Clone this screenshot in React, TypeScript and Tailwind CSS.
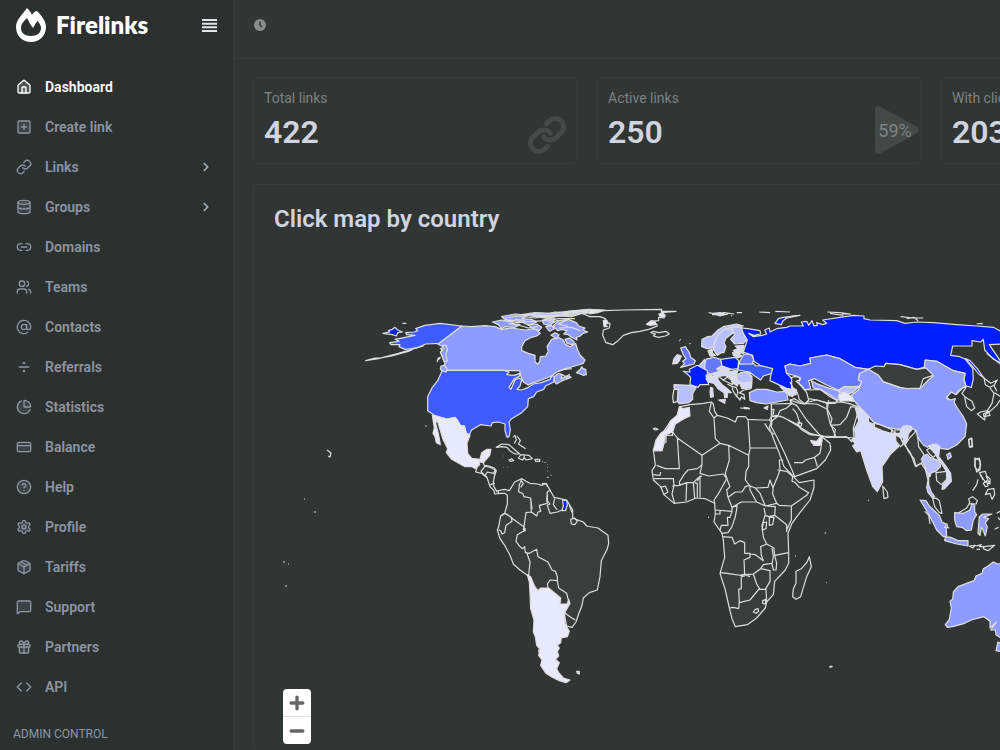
import {
  AtSign,
  ChartPie,
  ChevronRight,
  CircleHelp,
  Code,
  CreditCard,
  Database,
  Divide,
  Gift,
  House,
  Link,
  Link2,
  MessageSquare,
  Minus,
  Package,
  Plus,
  Settings,
  SquarePlus,
  Users,
  type LucideIcon,
} from "lucide-react";

interface NavItem {
  label: string;
  icon: LucideIcon;
  active?: boolean;
  nested?: boolean;
  tinted?: boolean;
}

const navItems: NavItem[] = [
  { label: "Dashboard", icon: House, active: true, tinted: true },
  { label: "Create link", icon: SquarePlus, tinted: true },
  { label: "Links", icon: Link, nested: true },
  { label: "Groups", icon: Database, nested: true, tinted: true },
  { label: "Domains", icon: Link2 },
  { label: "Teams", icon: Users },
  { label: "Contacts", icon: AtSign },
  { label: "Referrals", icon: Divide },
  { label: "Statistics", icon: ChartPie, tinted: true },
  { label: "Balance", icon: CreditCard, tinted: true },
  { label: "Help", icon: CircleHelp, tinted: true },
  { label: "Profile", icon: Settings, tinted: true },
  { label: "Tariffs", icon: Package, tinted: true },
  { label: "Support", icon: MessageSquare, tinted: true },
  { label: "Partners", icon: Gift, tinted: true },
  { label: "API", icon: Code },
];

// click intensity scale, darkest blue = most clicks
const NONE = "#393d3c";
const C1 = "#e8eaff";
const C2 = "#d5daff";
const C3 = "#b8c0ff";
const C4 = "#8f9cff";
const C5 = "#6678ff";
const C6 = "#3f5aff";
const C7 = "#001eff";

type Shape = [fill: string, d: string];

interface Region {
  name: string;
  x: number;
  y: number;
  shapes: Shape[];
}

// every region is drawn at 3x around its own origin
const regions: Region[] = [
  {
    name: "north-america",
    x: 355,
    y: 300,
    shapes: [
      [C4, "M320 78L350 80L390 77L420 80L440 88L470 84L510 90L540 86L556 100L545 108L530 112L510 122L500 140L500 152L520 160L540 166L540 185L547 192L554 186L556 170L572 168L580 155L576 140L590 118L610 112L625 120L630 132L645 140L662 130L668 150L675 165L690 180L685 190L660 198L625 208L605 216L590 228L560 240L530 250L520 255L505 246L498 230L494 212L470 212L448 211L262 211L270 190L258 160L264 140L248 132Z"],
      [C6, "M262 211L448 211L462 216L455 224L478 226L494 220L494 228L478 236L462 262L468 268L480 240L492 234L500 240L495 258L486 268L500 270L520 262L535 252L558 248L585 238L592 226L598 230L596 246L572 258L566 268L545 276L536 290L520 296L518 320L500 338L470 356L462 366L466 390L462 410L456 412L450 392L450 372L430 366L412 368L408 378L376 374L350 390L343 404L334 400L328 378L316 376L300 352L276 357L238 346L218 332L218 290L232 262L248 242Z"],
      [C6, "M320 78L252 130L212 132L190 142L170 146L150 148L132 140L135 134L108 134L104 128L132 124L120 118L150 112L180 106L155 104L152 98L178 96L188 92L182 86L210 76L256 70Z"],
      [C6, "M205 138L182 144L160 154L110 168L78 174L60 174L32 182L70 176L130 160L170 148Z"],
      [C7, "M84 100L104 96L100 92L112 88L120 82L128 90L142 96L128 98L124 108L112 104Z"],
      [C4, "M262 136L274 136L277 150L272 164L277 182L268 186L262 170L256 156L264 150L256 146L268 142M246 186L250 174L256 172L250 180M256 208L258 198L268 196L276 206L274 216L264 214Z"],
      [C4, "M412 66L440 60L475 62L470 70L495 74L480 82L450 80L440 86L430 74Z"],
      [C4, "M440 50L480 42L520 46L500 56L530 58L545 66L520 76L500 66L478 62L450 58Z"],
      [C4, "M520 74L545 72L560 82L552 92L530 84ZM562 60L590 56L600 66L582 76L566 72ZM572 80L590 76L598 86L584 94Z"],
      [C4, "M594 78L612 62L640 58L664 68L672 78L690 84L684 90L698 96L684 100L676 108L664 112L666 120L650 112L640 104L626 102L636 92L620 88L608 92Z"],
      [C4, "M588 106L600 98L612 104L606 116ZM630 118L644 114L658 126L652 134L636 130Z"],
      [C3, "M500 44L540 38L590 40L640 34L700 28L750 30L728 38L680 40L650 50L610 48L580 56L545 50Z"],
      ["none", "M450 54L490 48L540 54L600 46L660 42L740 33M530 44L590 50L640 44L620 38L700 34M446 62L490 68L530 64L580 62L610 56L660 56M584 40L600 36L640 38L690 30M590 52L610 62L580 68M640 58L610 72L640 80M612 84L650 82L676 92M480 58L510 62M460 70L500 78L520 84L548 80"],
      [C4, "M664 218L676 208L680 200L684 206L692 208L694 224L684 226L676 222ZM598 230L610 220L622 224L618 236L640 226L648 232L622 242L604 252L598 244Z"],
      ["none", "M610 214L628 208L650 206M622 224L636 232L644 222"],
      [C1, "M232 346L276 357L300 352L306 358L316 376L328 378L334 400L345 406L336 430L338 460L350 475L375 478L380 458L396 448L408 448L404 466L392 480L386 488L372 484L374 494L362 506L350 500L330 500L290 478L274 458L278 446L264 418L254 385L246 358L242 370L250 400L256 434L244 428L240 410L234 400L238 384Z"],
      [NONE, "M385 488L388 496L402 498L418 504L424 512L414 540L392 530L380 520L362 516L366 502L374 494L372 486Z"],
      ["none", "M380 520L390 512L402 500M392 530L404 516L424 512"],
      ["none", "M424 442L440 432L462 434L480 450L494 462L480 462L466 454L456 442L440 440ZM474 412L480 406L484 420L478 430M486 408L496 422L490 432L512 446M462 480L470 476L476 482L466 484ZM490 474L498 464L522 466L532 476L514 480L508 474L502 480ZM540 478L554 478L554 484L542 484ZM508 466L506 478M142 70L154 70"],
      ["none", "M212 380L213 380M214 376L213 378M444 468L445 468M446 502L447 502M456 502L457 502M562 484L564 484M570 486L571 488M576 494L577 494M577 502L578 503M578 512L579 514M587 526L589 526M580 530L578 534"],
    ],
  },
  {
    name: "south-america",
    x: 470,
    y: 430,
    shapes: [
      [NONE, "M33 124L42 134L50 140L60 170L72 182L74 192L92 190L104 190L112 196L112 222L104 250L92 258L86 290L82 300L90 326L104 346L120 376L130 402L150 420L172 436L180 444L200 480L206 520L280 540L284 560L290 588L306 592L318 576L326 552L336 526L340 504L358 488L382 480L390 440L394 392L412 356L416 340L414 316L384 294L350 288L340 276L318 268L308 264L308 240L296 220L290 210L270 206L252 202L240 180L228 160L214 166L204 162L180 160L168 154L156 146L134 156L118 182L104 178L92 180L80 184L72 170L70 158L76 120L60 112L46 108Z"],
      [C1, "M172 434L182 440L194 470L204 482L212 474L236 474L272 504L270 522L292 522L296 508L300 520L284 548L284 580L298 604L292 620L274 624L272 638L262 646L268 654L262 664L266 678L256 688L268 698L260 716L266 728L280 744L300 750L288 758L268 752L244 740L228 730L212 706L216 690L206 676L210 656L200 646L196 620L190 606L192 570L182 536L180 490L178 456Z"],
      ["none", "M92 258L104 250L124 262L126 274L108 286L104 308L96 312L92 302L86 300M104 250L110 252L130 268L150 282L162 290L168 248L184 246L182 204L162 200L158 190L146 186L148 164L156 148M184 246L200 258L204 246L212 244L208 226L232 220L230 208L232 186L240 180M182 204L186 238M232 190L232 212L240 222L232 226L240 250L262 246L276 240L290 240M254 206L250 224L262 240M162 290L166 302L156 306L142 314L138 334L148 348L158 356L164 350L166 368L178 370L200 358L204 380L234 396L246 420L256 424L262 440L262 452L240 450L232 462L234 474M162 290L160 300L168 296M170 368L180 396L176 436M262 452L266 474L290 490L296 514M284 548L300 560L316 570M152 150L160 160L152 172M216 160L230 162L232 170M302 268L314 264L322 274L314 284L304 282ZM298 226L306 248M202 650L208 652L206 666M200 648L204 640M44 138L52 126L70 130L76 120M60 164L74 160M84 190L86 180"],
      [C7, "M278 210L290 212L292 226L286 242L276 242L280 228Z"],
      [C3, "M320 724L328 724L328 732L322 730Z"],
    ],
  },
  {
    name: "europe",
    x: 590,
    y: 300,
    shapes: [
      ["none", "M-66 34L-20 30L40 32L100 30L215 28L214 34L258 34L214 38L226 46L222 54L206 52L206 62L180 64L186 72L170 74L200 72L202 78L176 88L150 94L124 98L100 106L84 122L68 134L48 128L38 106L40 90L58 84L60 70L44 68L46 56L30 50L0 50L-20 42Z"],
      [C1, "M40 62L50 60L54 68L46 74L52 80L42 80ZM206 42L220 40L224 50L212 52ZM170 72L184 62L196 66L198 74L180 76ZM0 30L16 32L18 38L0 42Z"],
      ["none", "M182 98L190 94L206 98L228 94L238 102L226 108L206 112L190 108L196 102ZM356 38L380 42L402 38L432 42M366 44L400 44M396 46L414 42M424 46L426 48M440 38L456 38M508 36L540 38M556 34L600 36M270 118L272 120M298 132L302 130M268 122L270 122"],
      [C2, "M370 40L390 38L404 42L390 48Z"],
      [C3, "M335 140L336 118L352 110L366 108L384 90L400 80L440 72L460 78L430 80L405 88L385 105L375 125L370 142L352 146Z"],
      [C3, "M405 88L425 86L430 98L408 115L402 128L408 140L402 158L394 158L382 166L370 148L375 125L385 102Z"],
      [C3, "M425 82L455 80L460 96L472 118L460 130L434 132L422 118L434 104L428 94Z"],
      [C2, "M354 152L366 146L368 160L376 166L360 168ZM436 138L462 136L460 146L444 146ZM430 152L444 146L462 150L460 160L440 158ZM428 158L444 160L456 168L444 174L430 166Z"],
      [C5, "M272 144L286 140L298 158L302 172L316 182L312 192L296 196L272 202L284 192L278 184L288 176L280 164Z"],
      [C2, "M252 176L262 164L274 168L268 182L262 190L248 192Z"],
      [C3, "M328 196L344 178L348 196L342 208Z"],
      [C5, "M346 184L350 176L362 176L364 170L392 178L396 198L380 206L388 216L362 222L346 216L344 200Z"],
      [C7, "M392 178L435 172L446 182L444 206L425 208L396 198Z"],
      [C7, "M280 214L300 216L298 208L322 196L352 212L352 236L356 254L330 254L324 262L300 254L302 232L292 222Z"],
      [C2, "M382 206L396 198L420 208L414 216L396 214ZM362 222L388 214L412 216L408 226L380 230ZM348 226L364 222L366 234L350 236Z"],
      [C2, "M410 216L444 210L440 224L420 232L408 228ZM420 232L436 226L448 244L442 258L430 250ZM448 248L486 248L484 264L456 266Z"],
      [C2, "M348 236L366 230L384 230L384 240L396 254L414 268L424 278L412 278L412 292L404 292L402 278L384 266L372 250L354 246ZM386 300L406 298L404 310ZM362 262L368 264L370 290L362 292L360 276Z"],
      [C6, "M446 192L490 190L498 198L530 196L548 206L546 220L520 228L512 240L494 228L478 216L444 210Z"],
      [C5, "M448 186L462 162L484 164L492 178L486 192L450 192Z"],
      [C3, "M440 226L452 218L472 216L486 230L486 244L460 250L442 242Z"],
      [C3, "M252 254L300 256L318 264L308 280L308 298L296 308L268 312L262 304L264 268L252 264Z"],
      [NONE, "M252 268L264 268L262 304L250 308L248 290Z"],
      ["none", "M388 232L400 240L412 232L424 240L428 254L412 246L398 240M412 252L428 260L438 262L444 276L440 288L450 300L454 290L464 298L462 284L448 278L462 270L484 266M426 262L430 274L440 290M462 322L476 324L478 326L464 326ZM522 324L534 318L532 328ZM478 216L482 232M438 210L436 222"],
      [C4, "M478 278L500 268L530 268L560 276L590 274L594 300L560 306L530 312L500 308L480 302Z"],
      [C2, "M570 260L606 262L620 270L618 284L600 288L586 276Z"],
      ["none", "M586 276L602 268L608 290L594 282"],
    ],
  },
  {
    name: "asia",
    x: 790,
    y: 300,
    shapes: [
      [C7, "M-146 84L-126 86L-90 92L-88 102L-108 106L-124 100L-110 110L-84 106L-70 102L-76 90L-62 84L-60 96L-40 86L-10 82L0 78L40 78L34 66L50 64L56 76L66 62L72 78L82 76L80 68L98 74L110 70L98 60L150 52L190 46L222 48L222 56L240 60L320 62L345 70L380 66L430 68L500 74L560 78L610 82L636 96L636 132L598 134L610 152L636 190L608 176L584 150L580 118L572 126L546 122L546 138L488 138L482 166L510 170L526 178L548 205L550 236L544 262L528 258L522 240L525 220L490 212L440 184L408 180L410 200L380 208L330 194L288 190L282 200L235 208L195 202L150 176L110 165L60 174L62 190L30 198L0 192L-15 198L-10 220L5 235L5 268L-10 265L-60 242L-58 228L-52 206L-90 196L-108 184L-112 166L-140 156L-132 132L-128 120L-140 100Z"],
      [C7, "M-45 70L-35 56L-20 52L30 46L-10 54L-22 64L-26 74ZM526 176L540 182L562 206L582 234L566 222L550 202Z"],
      ["none", "M112 36L150 38L182 42L156 42M120 40L160 46M332 50L370 54L400 54M350 56L372 52L384 62M560 72L578 70M572 70L576 74M0 50L22 46"],
      [C5, "M0 192L30 198L62 190L60 174L110 165L150 176L195 202L235 208L208 222L206 238L216 244L208 258L160 262L145 270L110 255L74 236L56 242L62 266L44 270L26 250L30 235L20 228L-10 220L-15 198Z"],
      [C4, "M235 208L265 225L280 245L330 262L390 266L415 240L430 228L402 216L405 180L440 184L490 212L525 220L522 240L528 258L505 272L498 284L484 276L470 292L480 300L496 296L492 306L502 324L520 350L530 372L525 410L500 435L475 448L455 446L430 432L412 442L400 435L385 415L375 390L350 376L330 388L290 382L250 366L235 348L212 325L190 300L185 285L205 270L215 245L205 240L210 220Z"],
      [C4, "M64 242L78 250L110 262L145 272L150 280L144 302L120 285L90 268L70 264Z"],
      [C3, "M145 272L162 260L208 260L188 278L160 284Z"],
      [C1, "M146 286L162 276L184 288L192 304L172 302L150 304Z"],
      [NONE, "M235 208L256 198L282 200L288 190L330 194L380 208L408 204L430 226L400 236L390 264L350 266L330 262L280 245L265 225Z"],
      [NONE, "M0 300L14 296L40 312L54 306L80 300L110 308L150 306L176 310L210 322L200 350L190 384L192 414L160 412L100 408L60 398L32 370L10 330Z"],
      ["none", "M0 234L14 230L30 232L32 238L18 244L36 258L50 278L56 300L44 312L28 298L22 278L8 262L0 246M44 268L62 270L90 268L120 290L142 302L136 310L112 310L82 300L56 296M110 308L112 336L122 376L136 388L132 412L170 410L186 426M122 376L150 374L170 352L182 320L206 322M0 300L12 320L34 370"],
      [C2, "M196 324L212 325L235 350L236 366L250 372L290 392L314 402L330 392L340 378L362 378L368 386L356 400L348 432L342 430L340 414L318 406L326 440L302 462L276 500L278 545L262 575L248 560L230 510L212 452L200 456L188 438L196 430L184 420L196 412L194 386L206 362Z"],
      [NONE, "M252 370L270 374L308 390L302 400L276 392L254 382ZM314 390L332 390L330 400L316 400ZM316 406L330 410L340 432L332 440L318 424Z"],
      [NONE, "M378 390L372 400L358 414L346 434L356 456L372 476L378 500L398 486L402 464L386 440L384 418Z"],
      ["none", "M498 284L520 262L528 262L516 280L526 292L546 304L554 324L544 332L530 320L524 292M470 292L474 300M536 420L544 414L548 440L540 442ZM556 478L568 474L572 496L564 512L554 500ZM582 234L602 250L622 240L612 256L600 262L586 254ZM600 264L612 280L606 310L592 332L572 336L562 342L572 350L584 360L586 344L600 334L620 316L630 300M614 278L632 290M580 342L596 334L600 346L582 350ZM590 160L636 196M612 256L620 274"],
    ],
  },
  {
    name: "africa-and-middle-east",
    x: 640,
    y: 400,
    shapes: [
      [NONE, "M120 20L150 14L190 10L214 6L220 12L224 34L232 46L262 54L286 66L292 50L316 50L324 58L368 60L388 60L394 66L388 82L402 120L418 160L432 200L448 216L466 236L478 248L522 240L522 262L510 300L478 340L456 370L444 400L446 458L446 490L436 510L404 544L400 584L380 606L376 624L350 654L322 674L286 680L276 656L268 624L256 570L240 520L254 472L250 420L246 400L222 366L226 342L224 310L196 296L168 294L140 306L102 310L72 284L62 260L40 240L36 212L46 196L40 150L62 108L90 66L110 50Z"],
      [NONE, "M394 12L456 10L470 16L500 60L540 106L570 130L572 150L556 180L530 206L464 230L456 210L434 160L410 110L394 80Z"],
      [C1, "M118 20L130 26L148 22L150 48L132 56L106 72L98 96L78 104L72 126L66 152L40 152L48 120L62 100L82 86L92 62L112 46Z"],
      ["none", "M98 96L98 106L78 106M66 152L72 130L78 126L78 106M40 152L66 152M112 114L186 166L186 194L172 206L144 210L132 224L118 246L120 256M112 114L118 206L76 206L50 196M98 96L112 114M186 166L240 130L266 136L326 166L330 146L324 58M240 130L226 116L222 54M214 6L208 34L222 54L232 46M330 144L410 144M326 166L326 200L318 214L316 240L330 258L346 264L384 262L390 240L398 262L402 256L412 232L420 210L418 180L430 180M266 136L268 180L256 220L262 240L270 260L260 270L264 292L286 276L306 276L316 260L330 256M186 194L180 220L206 228L250 222L260 236L236 280L222 300L224 310M40 224L60 226L62 216M42 236L100 236L102 256L96 282L104 310M62 262L76 258L84 276L70 284M96 258L118 256L140 248L160 248L164 294M140 248L138 304M164 248L172 250L172 292M172 244L180 228L180 292M160 248L174 234L186 228M264 292L276 322L304 306L350 306L376 318L410 310L418 316L454 318L454 360L440 390M350 306L330 270L330 256M346 264L360 280L376 318M400 256L398 282L410 310M412 210L440 214L458 230M464 246L478 262L506 278L500 286L480 300L454 318M458 230L456 244L464 246M226 330L276 334L276 322M226 342L240 342L240 332M276 334L270 352L262 352L264 376L244 376L240 390M292 316L286 350L276 380L264 398L246 400M276 322L290 318M246 410L276 412L284 432L300 422L314 428L314 460L330 460L330 472L312 480L314 522L300 526M372 324L376 344L366 376L370 412L380 432L362 440L364 466L370 482L346 464L330 462M378 318L406 320L404 346L386 350L376 346M404 346L440 374L440 396M404 466L446 458M370 368L380 366L378 386L366 390ZM388 352L402 352L398 374L388 376ZM380 432L402 444L404 466L410 490L408 510L400 510L396 492L400 470L396 444M396 490L370 494L362 506L340 522L314 524L330 530M240 518L262 520L314 528L304 530L304 566L296 568L298 608L330 600L356 568L378 568L380 606M268 624L280 622L296 626L298 606M340 522L350 552L360 568M362 506L390 512L390 544L376 568M346 628L354 626L356 634L348 640L340 636ZM368 602L378 598L376 612L368 610ZM328 524L340 522"],
      ["none", "M374 70L388 92L402 104M388 60L396 48L394 12M394 30L402 28L400 44M394 50L412 50L396 62L394 80M412 50L420 32L440 24L456 10M396 50L408 46L430 52L470 76L480 70L470 40L458 26M420 48L470 72L486 90L510 104L546 108L544 122L528 134L518 130L514 120M546 108L544 136L540 160L524 172L496 180L488 188L462 188M524 172L532 200M470 76L510 100L560 112L600 112M562 28L576 56L572 72L588 112M562 28L566 0M450 0L480 10L530 12L562 28M474 66L486 70L482 80L476 76Z"],
      [C1, "M512 122L530 124L544 108L546 122L540 136L522 136Z"],
      [NONE, "M508 470L514 500L500 530L482 590L468 598L458 590L460 566L468 550L468 514L484 506L500 488Z"],
      ["none", "M40 86L46 84L54 88L46 90ZM204 352L207 352M554 398L558 400M466 466L467 469M558 548L560 548M300 24L330 26M372 24L384 20"],
    ],
  },
  {
    name: "south-east-asia-and-australia",
    x: 830,
    y: 430,
    shapes: [
      [C3, "M280 78L292 72L300 82L316 88L328 92L332 110L318 124L304 128L300 140L296 130L296 164L304 186L314 200L308 204L294 188L290 172L294 150L284 110L274 88Z"],
      [C2, "M296 48L318 42L330 50L328 62L326 80L346 106L362 130L364 154L344 176L336 178L338 164L350 152L350 126L338 106L320 80L306 60Z"],
      [NONE, "M318 128L350 124L350 148L334 164L320 152ZM290 60L300 54L318 74L310 82L302 76Z"],
      [C4, "M350 74L360 68L364 80L354 88Z"],
      ["none", "M308 206L318 204L328 212L336 250L328 248L314 230ZM158 168L172 186L174 202L162 206ZM384 250L410 234L418 220M416 206L428 200L442 212L438 222L420 222ZM434 84L450 92L450 120L440 126L436 110ZM448 128L466 124L470 138L480 146L480 162L466 156L458 144ZM460 160L470 152L474 168L466 170ZM474 178L492 176L494 194L486 208L480 190L466 194ZM444 148L440 164L428 182M450 134L460 150M468 138L478 158M256 108L274 100L280 110L296 132M220 40L240 66L256 108M416 28L426 26L426 50L418 50ZM184 0L214 26L222 44"],
      [C4, "M270 210L288 212L298 228L328 256L336 276L348 282L350 318L340 320L320 300L308 276L290 242Z"],
      [C4, "M346 320L362 322L384 332L414 332L414 348L380 342L344 332Z"],
      [C4, "M374 248L400 250L420 240L426 220L434 226L434 246L440 254L430 270L424 300L410 302L396 292L380 290L374 270Z"],
      [C4, "M448 260L458 252L486 252L460 262L476 266L466 278L472 290L466 318L458 298L454 292L450 316L444 310Z"],
      ["none", "M418 348L436 346L428 354ZM438 348L454 344L448 350L464 350M450 358L440 358M462 350L494 346L474 362L460 356ZM284 244L296 256L300 282M342 292L358 294M350 280L354 294M500 250L510 244M494 298L506 292M504 262L510 270"],
      [C4, "M520 398L504 402L490 396L474 408L460 416L456 430L438 438L432 452L384 470L370 486L368 508L360 514L364 534L358 568L346 584L352 592L368 590L404 580L424 570L462 560L480 574L480 594L500 576L482 600L496 600L498 614L520 630Z"],
      [C4, "M504 636L498 662L520 666L520 644Z"],
      ["none", "M114 210L116 212M420 118L421 118M414 160L415 160M0 708L8 710M0 50L4 50"],
    ],
  },
];

const specks = ["M327 450L331 453L330 457L328 456", "M304 499h1", "M314 512h2", "M283 562h2", "M288 564h1", "M285 586h2", "M829 667h3"];

function Logo() {
  return (
    <a href="#" className="flex items-center gap-[10px] text-white">
      <svg viewBox="0 0 30 34" className="h-[34px] w-[30px]" fill="currentColor" aria-hidden="true">
        <path
          fillRule="evenodd"
          d="M11 0C13 2 15 4 16 7C17 5 19 3 21 3C25 7 30 13 30 19C30 28 23 34 15 34C7 34 0 28 0 19C0 12 6 7 11 0ZM11 10C8 13 5 16 5 20C5 25 9 28 15 28C21 28 25 25 25 20C25 17 23 15 22 13C20 14 19 17 17 20C14 17 13 13 11 10Z"
        />
      </svg>
      <span className="font-[Lato] text-[24px] leading-8 font-extrabold">Firelinks</span>
    </a>
  );
}

function NavRow({ item }: { item: NavItem }) {
  const Icon = item.icon;

  return (
    <li>
      <a
        href="#"
        className={`flex h-10 items-center gap-[13px] pr-5 pl-4 text-[14px] font-semibold ${
          item.active ? "text-white" : "text-[#8d95a3]"
        }`}
      >
        <Icon
          className="h-4 w-4"
          strokeWidth={2}
          fill={item.tinted ? "currentColor" : "none"}
          fillOpacity={0.18}
        />
        <span className="flex-1">{item.label}</span>
        {item.nested && <ChevronRight className="h-3.5 w-3.5 text-[#a7adb8]" strokeWidth={3} />}
      </a>
    </li>
  );
}

function Sidebar() {
  return (
    <aside className="w-[234px] shrink-0 border-r border-[#363a39] bg-[#2c302f]">
      <div className="flex h-[50px] items-center justify-between px-4">
        <Logo />
        <button type="button" aria-label="Toggle menu" className="text-[#e2e5ea]">
          <svg viewBox="0 0 15 13" className="h-[13px] w-[15px]" fill="currentColor">
            <path d="M0 0h15v2H0zM0 3.7h15v2H0zM0 7.3h15v2H0zM0 11h15v2H0z" />
          </svg>
        </button>
      </div>
      <nav className="pt-[17px]">
        <ul>
          {navItems.map((item) => (
            <NavRow key={item.label} item={item} />
          ))}
        </ul>
        <h6 className="px-[13px] pt-[17px] text-[12px] leading-5 text-[#8d95a3]">ADMIN CONTROL</h6>
      </nav>
    </aside>
  );
}

interface StatCardProps {
  label: string;
  value: string;
  children?: React.ReactNode;
}

function StatCard({ label, value, children }: StatCardProps) {
  return (
    <div className="flex h-[87px] w-[325px] shrink-0 items-end justify-between rounded border border-[#383c3b] px-2.5 pt-2.5 pb-2">
      <div className="self-start">
        <p className="text-[14px] leading-5 text-[#7d8280]">{label}</p>
        <p className="pt-1 text-[32px] leading-10 font-semibold text-[#d0d4de]">{value}</p>
      </div>
      {children}
    </div>
  );
}

function WorldMap() {
  return (
    <svg
      viewBox="254 260 746 490"
      className="h-[490px] w-[746px] overflow-visible"
      stroke="#dededd"
      strokeWidth="1.2"
      strokeLinejoin="round"
      role="img"
      aria-label="World map"
    >
      {regions.map((region) => (
        <g key={region.name} transform={`translate(${region.x} ${region.y}) scale(${1 / 3})`}>
          {region.shapes.map(([fill, d], i) => (
            <path key={i} fill={fill} d={d} vectorEffect="non-scaling-stroke" />
          ))}
        </g>
      ))}
      {specks.map((d) => (
        <path key={d} d={d} fill="none" />
      ))}
    </svg>
  );
}

export default function App() {
  return (
    <div className="flex h-screen overflow-hidden bg-[#313534] font-[Roboto,sans-serif]">
      <Sidebar />
      <div className="min-w-0 flex-1 overflow-hidden">
        <header className="flex h-[59px] items-center border-b border-[#383c3b] px-5 pb-2">
          <svg viewBox="0 0 12 12" className="h-3 w-3" aria-hidden="true">
            <circle cx="6" cy="6" r="6" fill="#8b8e8d" />
            <path d="M6 2.5V6L8 8" fill="none" stroke="#313534" strokeWidth="1.5" />
          </svg>
        </header>

        <main className="flex min-w-[1060px] flex-col gap-5 px-[19px] pt-[18px]">
          <div className="flex gap-[19px]">
            <StatCard label="Total links" value="422">
              <Link className="h-10 w-10 text-[#454948]" strokeWidth={3} />
            </StatCard>
            <StatCard label="Active links" value="250">
              <div className="-mr-2 grid h-[50px] w-[44px] place-items-center text-[18px] text-[#808382]">
                <svg viewBox="0 0 44 50" className="col-start-1 row-start-1 h-[50px] w-[44px]" fill="#444847">
                  <path d="M0 5Q0-1 6 2L41 21Q46 25 41 29L6 48Q0 51 0 45Z" />
                </svg>
                <span className="col-start-1 row-start-1 pr-1">59%</span>
              </div>
            </StatCard>
            <StatCard label="With clicks" value="203" />
          </div>

          <section className="relative rounded border border-[#383c3b]">
            <h2 className="px-5 pt-[18px] text-[24px] leading-8 font-semibold text-[#d0d4de]">Click map by country</h2>
            <div className="pt-[25px]">
              <WorldMap />
            </div>
            <div className="absolute top-[504px] left-[29px] flex w-7 flex-col overflow-hidden rounded-sm bg-white text-[#666]">
              <button type="button" aria-label="Zoom in" className="flex h-7 items-center justify-center border-b border-[#ddd]">
                <Plus className="h-5 w-5" strokeWidth={4} />
              </button>
              <button type="button" aria-label="Zoom out" className="flex h-[27px] items-center justify-center">
                <Minus className="h-5 w-5" strokeWidth={4} />
              </button>
            </div>
          </section>
        </main>
      </div>
    </div>
  );
}
